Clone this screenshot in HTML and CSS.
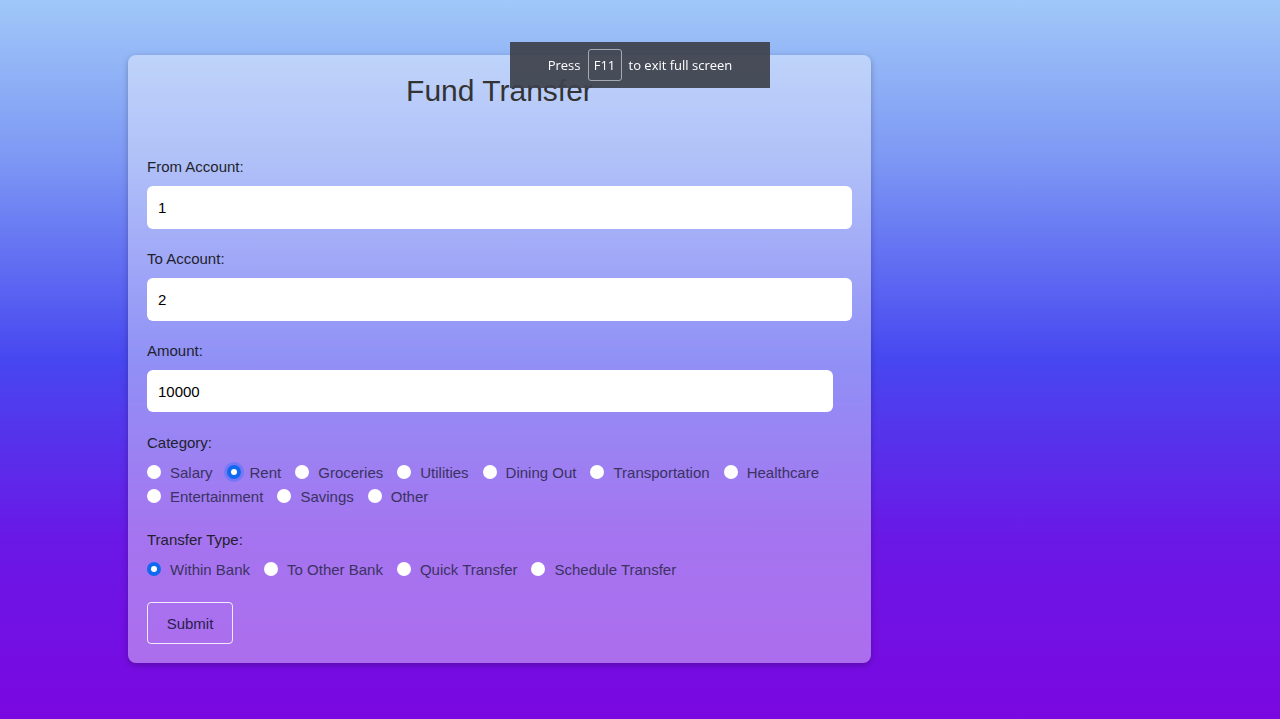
FILE: index.html
```html
<!DOCTYPE html>
<html lang="en">
<head>
<meta charset="utf-8">
<title>Fund Transfer</title>
<link rel="stylesheet" href="styles.css">
</head>
<body>
<div class="page">
  <form class="card">
    <h2 class="title">Fund Transfer</h2>

    <label class="field-label" for="from">From Account:</label>
    <input class="text-input" id="from" type="text" value="1">

    <label class="field-label" for="to">To Account:</label>
    <input class="text-input" id="to" type="text" value="2">

    <label class="field-label" for="amount">Amount:</label>
    <input class="text-input amount" id="amount" type="text" value="10000">

    <div class="field-label group-label">Category:</div>
    <div class="radio-row">
      <label class="option"><input type="radio" name="cat"><span>Salary</span></label>
      <label class="option"><input type="radio" name="cat" class="focused" checked><span>Rent</span></label>
      <label class="option"><input type="radio" name="cat"><span>Groceries</span></label>
      <label class="option"><input type="radio" name="cat"><span>Utilities</span></label>
      <label class="option"><input type="radio" name="cat"><span>Dining Out</span></label>
      <label class="option"><input type="radio" name="cat"><span>Transportation</span></label>
      <label class="option"><input type="radio" name="cat"><span>Healthcare</span></label>
      <label class="option"><input type="radio" name="cat"><span>Entertainment</span></label>
      <label class="option"><input type="radio" name="cat"><span>Savings</span></label>
      <label class="option"><input type="radio" name="cat"><span>Other</span></label>
    </div>

    <div class="field-label group-label type-label">Transfer Type:</div>
    <div class="radio-row">
      <label class="option"><input type="radio" name="type" checked><span>Within Bank</span></label>
      <label class="option"><input type="radio" name="type"><span>To Other Bank</span></label>
      <label class="option"><input type="radio" name="type"><span>Quick Transfer</span></label>
      <label class="option"><input type="radio" name="type"><span>Schedule Transfer</span></label>
    </div>

    <button type="button" class="submit">Submit</button>
  </form>
</div>

<div class="fs-toast">
  <span>Press</span><span class="key">F11</span><span>to exit full screen</span>
</div>
</body>
</html>
```

FILE: styles.css
```css
html, body {
  margin: 0;
  padding: 0;
}

body {
  height: 719px;
  overflow: hidden;
  font-family: "Liberation Sans", Arial, sans-serif;
  background: linear-gradient(to bottom, #a0c8f8 0%, #7d98f4 22%, #4747f0 50%, #6a18e6 75%, #7a08e0 100%);
}

.page {
  padding: 55px 0 0 128px;
}

.card {
  width: 743px;
  box-sizing: border-box;
  padding: 19px 19px 19px 19px;
  background: rgba(255, 255, 255, 0.4);
  border-radius: 8px;
  box-shadow: 0 2px 6px rgba(0, 0, 0, 0.25);
}

.title {
  margin: 0 0 50px 0;
  text-align: center;
  font-weight: normal;
  font-size: 30px;
  line-height: 34px;
  color: #333;
}

.field-label {
  display: block;
  font-size: 15px;
  line-height: 18px;
  color: #1f1f2e;
  margin-bottom: 10px;
}

.text-input {
  display: block;
  width: 100%;
  height: 43px;
  box-sizing: border-box;
  margin: 0 0 21px 0;
  padding: 0 11px;
  border: none;
  border-radius: 6px;
  background: #fff;
  font-family: "Liberation Sans", Arial, sans-serif;
  font-size: 15px;
  color: #000;
  outline: none;
}

.text-input.amount {
  width: 686px;
  height: 42px;
  margin-bottom: 22px;
}

.group-label {
  margin-bottom: 8px;
}

.type-label {
  margin-top: 23px;
}

.radio-row {
  display: flex;
  flex-wrap: wrap;
}

.option {
  display: flex;
  align-items: center;
  height: 24px;
  margin-right: 14px;
  font-size: 15px;
  color: #3b3262;
}

.option input {
  appearance: none;
  -webkit-appearance: none;
  width: 14px;
  height: 14px;
  margin: 0 9px 0 0;
  border-radius: 50%;
  background: #fff;
  box-sizing: border-box;
  flex: none;
}

.option input:checked {
  border: 4px solid #1169f0;
  background: #fff;
}

.option input.focused {
  box-shadow: 0 0 0 3px rgba(40, 110, 255, 0.35);
}

.submit {
  display: block;
  margin-top: 21px;
  width: 86px;
  height: 42px;
  background: transparent;
  border: 1px solid rgba(255, 255, 255, 0.85);
  border-radius: 4px;
  font-family: "Liberation Sans", Arial, sans-serif;
  font-size: 15px;
  color: #2a1d4d;
  padding: 0;
}

.fs-toast {
  position: fixed;
  left: 510px;
  top: 42px;
  width: 260px;
  height: 46px;
  background: rgba(62, 66, 76, 0.93);
  display: flex;
  align-items: center;
  justify-content: center;
  gap: 7px;
  font-family: "Open Sans", "Noto Sans", sans-serif;
  font-size: 13px;
  color: #fff;
}

.fs-toast .key {
  display: flex;
  align-items: center;
  justify-content: center;
  width: 34px;
  height: 32px;
  box-sizing: border-box;
  border: 1px solid #a6a9b0;
  border-radius: 3px;
}
```
